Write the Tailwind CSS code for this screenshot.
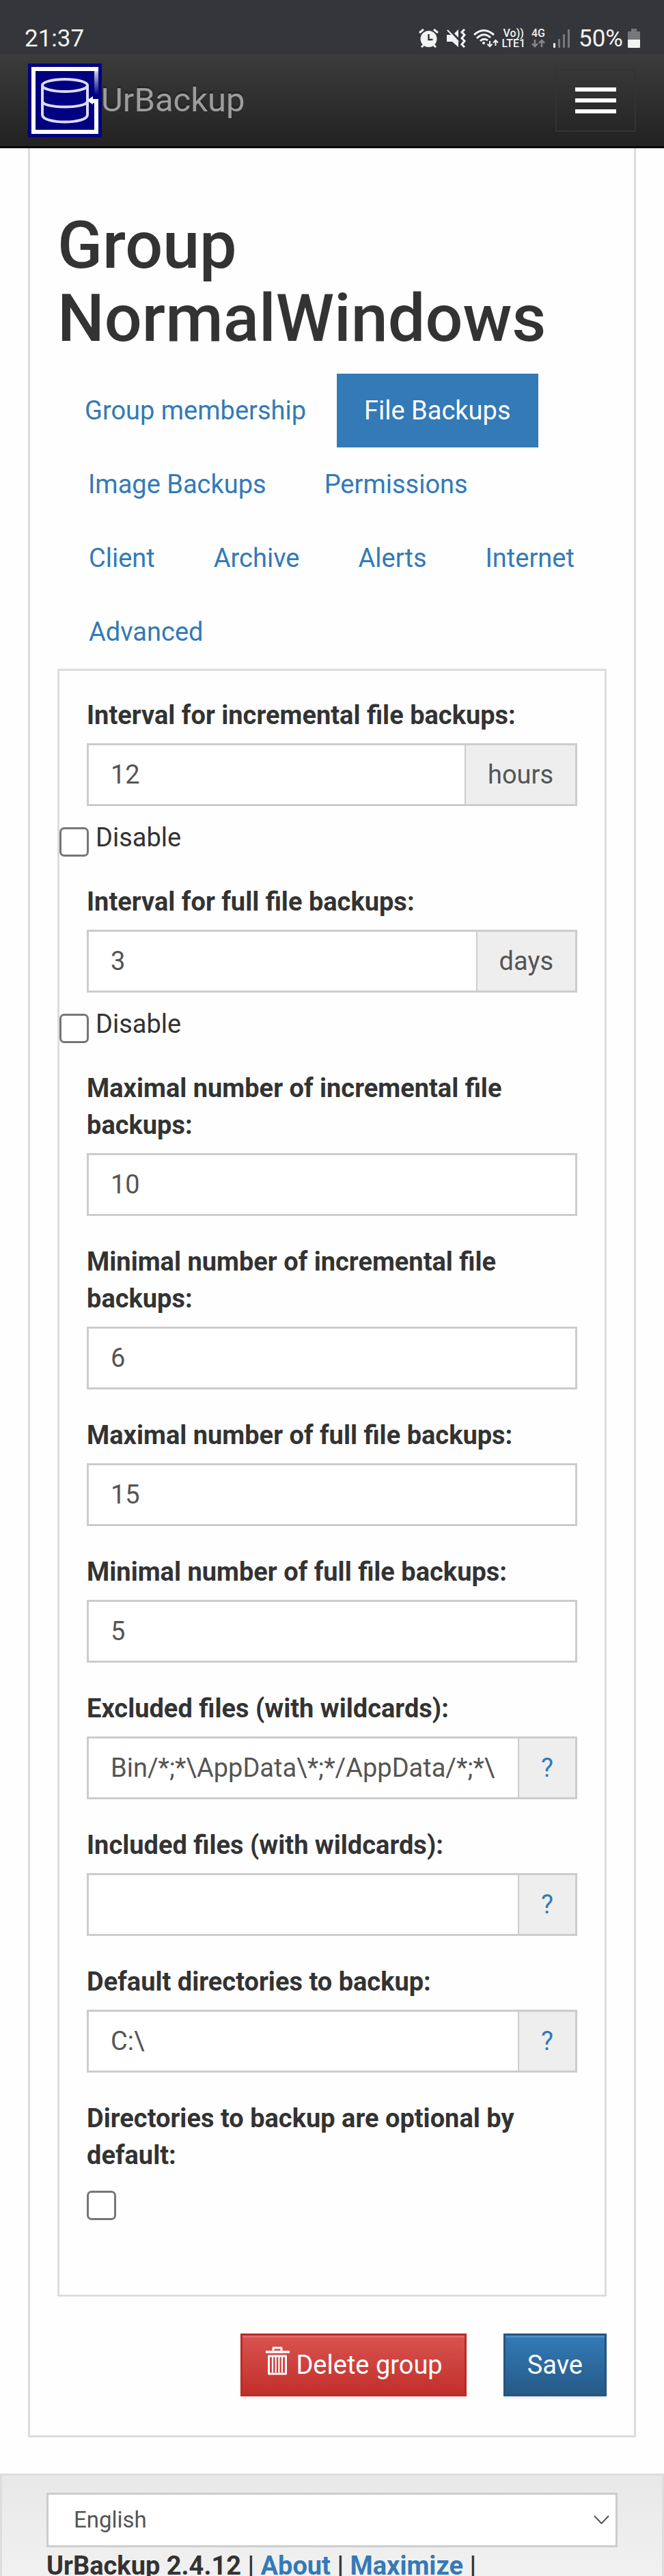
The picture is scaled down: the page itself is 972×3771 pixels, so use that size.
<!DOCTYPE html>
<html lang="en">
<head>
  <meta charset="UTF-8">
  <meta name="viewport" content="width=device-width, initial-scale=1">
  <title>UrBackup</title>
  <script src="https://cdn.jsdelivr.net/npm/@tailwindcss/browser@4"></script>
</head>
<body class="flex h-screen flex-col overflow-hidden bg-[#fefefe] font-[Roboto,'Liberation_Sans',sans-serif] text-[38px] leading-[54px] text-[#333]">

  <!-- Status bar -->
  <div class="flex h-[79px] shrink-0 items-end justify-between bg-[#35363b] pr-[35px] pb-2 pl-9 text-[#f2f2f2]">
    <span class="text-[35px] leading-[28px]">21:37</span>
    <div class="flex items-end">
      <svg class="mr-[10px] mb-[1px] h-[28px] w-[31px]" viewBox="0 0 31 28" fill="none" stroke="#f2f2f2" stroke-width="3">
        <circle cx="15.5" cy="15" r="12" fill="#f2f2f2" stroke="none"/>
        <path d="M2 6 8 1M29 6 23 1M5 27l4-4M26 27l-4-4"/>
        <path d="M15.5 8v8h6" stroke="#35363b" stroke-width="2.5"/>
      </svg>
      <svg class="mr-[11px] mb-[1px] h-[28px] w-[29px]" viewBox="0 0 29 28" fill="#f2f2f2">
        <path d="M1 9h7l10 11v7l-9-8H1zM12 7l6-6v12z"/>
        <path d="M2 2l16 17" stroke="#f2f2f2" stroke-width="2"/>
        <path d="M27 1l-4 4 4 4-4 5 4 4-4 5 4 4" fill="none" stroke="#f2f2f2" stroke-width="3"/>
      </svg>
      <svg class="mr-[4px] mb-[1px] h-[28px] w-[37px]" viewBox="0 0 37 28" fill="none" stroke="#f2f2f2" stroke-width="3">
        <path d="M1 9Q15-4 30 9M5 14Q15 4 25 13M10 18Q15 13 21 17"/>
        <circle cx="15" cy="21" r="2" fill="#f2f2f2" stroke="none"/>
        <path d="M24 18v8M20.500 22.500l3.500 3.500 3.500-3.500M32.500 25v-8M29 20.500l3.500-3.500 3.500 3.500" stroke-width="2"/>
      </svg>
      <div class="mr-[9px] text-center text-[16px] leading-[15px] font-medium">Vo))<br>LTE1</div>
      <div class="mr-[12px] flex flex-col items-center">
        <span class="text-[16px] leading-[15px] font-medium">4G</span>
        <svg class="mb-[1px] h-[14px] w-[20px]" viewBox="0 0 20 14" fill="none" stroke="#85868a" stroke-width="2.500">
          <path d="M5 2v10M1 8l4 4 4-4M15 13V3M11 7l4-4 4 4"/>
        </svg>
      </div>
      <svg class="mr-[13px] mb-[1px] h-[27px] w-[24px]" viewBox="0 0 24 27" fill="#77787b">
        <rect x="0" y="20" width="3" height="7" rx="1" fill="#f2f2f2"/>
        <rect x="7" y="14" width="3" height="13" rx="1"/>
        <rect x="14" y="7" width="3" height="20" rx="1"/>
        <rect x="21" y="0" width="3" height="27" rx="1"/>
      </svg>
      <span class="mr-[7px] text-[35px] leading-[28px]">50%</span>
      <svg class="mb-[1px] h-[28px] w-[18px]" viewBox="0 0 18 28">
        <path d="M0 16V5q0-1 1-1h4V0h8v4h4q1 0 1 1v11z" fill="#77787b"/>
        <path d="M0 16h18v11q0 1-1 1H1q-1 0-1-1z" fill="#f2f2f2"/>
      </svg>
    </div>
  </div>

  <!-- Navbar -->
  <nav class="flex h-[138px] shrink-0 items-center justify-between border-b-3 border-[#080808] bg-linear-to-b from-[#3c3c3c] to-[#222] px-[41px]">
    <a href="#" class="flex items-center text-[49px] text-[#9d9d9d] [text-shadow:0_-3px_0_rgba(0,0,0,0.25)]">
      <svg class="mr-[-1px] size-[108px]" viewBox="0 0 108 108" fill="none">
        <defs>
          <linearGradient id="fade" x1="0" y1="0" x2="0" y2="1">
            <stop offset="0" stop-color="#fff"/>
            <stop offset="1" stop-color="#fff" stop-opacity="0"/>
          </linearGradient>
        </defs>
        <rect width="108" height="108" fill="#000080"/>
        <path d="M103 8H8v92h92V55h-7" stroke="#fff" stroke-width="6"/>
        <rect x="97" y="11" width="6" height="35" fill="url(#fade)" opacity=".8"/>
        <path d="M86 54l9-6v12z" fill="#fff"/>
        <g stroke="#dcdcfa" stroke-width="4">
          <ellipse cx="54" cy="32" rx="33" ry="9"/>
          <path d="M21 32v43c0 14 66 14 66 0V32M21 56c4 10 62 10 66 0"/>
        </g>
      </svg>
      UrBackup
    </a>
    <button type="button" aria-label="Menu" class="flex h-[92px] w-[118px] flex-col items-center justify-center gap-[10px] border-2 border-[#333]">
      <span class="h-[6px] w-[60px] bg-white"></span>
      <span class="h-[6px] w-[60px] bg-white"></span>
      <span class="h-[6px] w-[60px] bg-white"></span>
    </button>
  </nav>

  <!-- Settings -->
  <main class="mx-[41px] shrink-0 border-3 border-t-0 border-[#ddd] px-10 pt-[89px] pb-[57px]">
    <h1 class="mb-[27px] text-[97px] leading-[107px] font-medium">Group NormalWindows</h1>

    <ul class="flex flex-wrap text-[#337ab7]">
      <li><a href="#" class="block px-10 py-[27px]">Group membership</a></li>
      <li class="ml-[5px]"><a href="#" class="block bg-[#337ab7] px-10 py-[27px] text-white">File Backups</a></li>
      <li class="ml-[5px]"><a href="#" class="block px-10 py-[27px]">Image Backups</a></li>
      <li class="ml-[5px]"><a href="#" class="block px-10 py-[27px]">Permissions</a></li>
      <li class="ml-[6px]"><a href="#" class="block px-10 py-[27px]">Client</a></li>
      <li class="ml-[6px]"><a href="#" class="block px-10 py-[27px]">Archive</a></li>
      <li class="ml-[6px]"><a href="#" class="block px-10 py-[27px]">Alerts</a></li>
      <li class="ml-[6px]"><a href="#" class="block px-10 py-[27px]">Internet</a></li>
      <li class="ml-[6px]"><a href="#" class="block px-10 py-[27px]">Advanced</a></li>
    </ul>

    <form>
      <div class="flex flex-col gap-10 border-3 border-[#ddd] px-10 pt-[38px] pb-[109px]">
        <div>
          <label for="update_freq_incr" class="mb-[14px] block font-bold">Interval for incremental file backups:</label>
          <div class="flex h-[92px] border-3 border-[#ccc] text-[#555]">
            <input id="update_freq_incr" type="text" value="12" class="min-w-0 flex-1 bg-white px-8">
            <span class="flex items-center border-l-2 border-[#ccc] bg-[#eee] px-8">hours</span>
          </div>
          <label class="mt-[19px] ml-[-40px] flex h-[54px] gap-[10px]">
            <input type="checkbox" class="mt-[12px] size-[43px] appearance-none rounded-[7px] border-3 border-[#767676] bg-white">
            Disable
          </label>
        </div>

        <div>
          <label for="update_freq_full" class="mb-[14px] block font-bold">Interval for full file backups:</label>
          <div class="flex h-[92px] border-3 border-[#ccc] text-[#555]">
            <input id="update_freq_full" type="text" value="3" class="min-w-0 flex-1 bg-white px-8">
            <span class="flex items-center border-l-2 border-[#ccc] bg-[#eee] px-8">days</span>
          </div>
          <label class="mt-[19px] ml-[-40px] flex h-[54px] gap-[10px]">
            <input type="checkbox" class="mt-[12px] size-[43px] appearance-none rounded-[7px] border-3 border-[#767676] bg-white">
            Disable
          </label>
        </div>

        <div>
          <label for="max_file_incr" class="mb-[14px] block font-bold">Maximal number of incremental file backups:</label>
          <input id="max_file_incr" type="text" value="10" class="block h-[92px] w-full border-3 border-[#ccc] bg-white px-8 text-[#555]">
        </div>

        <div>
          <label for="min_file_incr" class="mb-[14px] block font-bold">Minimal number of incremental file backups:</label>
          <input id="min_file_incr" type="text" value="6" class="block h-[92px] w-full border-3 border-[#ccc] bg-white px-8 text-[#555]">
        </div>

        <div>
          <label for="max_file_full" class="mb-[14px] block font-bold">Maximal number of full file backups:</label>
          <input id="max_file_full" type="text" value="15" class="block h-[92px] w-full border-3 border-[#ccc] bg-white px-8 text-[#555]">
        </div>

        <div>
          <label for="min_file_full" class="mb-[14px] block font-bold">Minimal number of full file backups:</label>
          <input id="min_file_full" type="text" value="5" class="block h-[92px] w-full border-3 border-[#ccc] bg-white px-8 text-[#555]">
        </div>

        <div>
          <label for="exclude_files" class="mb-[14px] block font-bold">Excluded files (with wildcards):</label>
          <div class="flex h-[92px] border-3 border-[#ccc] text-[#555]">
            <input id="exclude_files" type="text" value="Bin/*;*\AppData\*;*/AppData/*;*\" class="min-w-0 flex-1 bg-white px-8">
            <a href="#" class="flex items-center border-l-2 border-[#ccc] bg-[#eee] px-8 text-[#337ab7]">?</a>
          </div>
        </div>

        <div>
          <label for="include_files" class="mb-[14px] block font-bold">Included files (with wildcards):</label>
          <div class="flex h-[92px] border-3 border-[#ccc] text-[#555]">
            <input id="include_files" type="text" class="min-w-0 flex-1 bg-white px-8">
            <a href="#" class="flex items-center border-l-2 border-[#ccc] bg-[#eee] px-8 text-[#337ab7]">?</a>
          </div>
        </div>

        <div>
          <label for="default_dirs" class="mb-[14px] block font-bold">Default directories to backup:</label>
          <div class="flex h-[92px] border-3 border-[#ccc] text-[#555]">
            <input id="default_dirs" type="text" value="C:\" class="min-w-0 flex-1 bg-white px-8">
            <a href="#" class="flex items-center border-l-2 border-[#ccc] bg-[#eee] px-8 text-[#337ab7]">?</a>
          </div>
        </div>

        <div>
          <label for="backup_dirs_optional" class="mb-[25px] block font-bold">Directories to backup are optional by default:</label>
          <input id="backup_dirs_optional" type="checkbox" class="block size-[43px] appearance-none rounded-[7px] border-3 border-[#767676] bg-white">
        </div>
      </div>

      <div class="mt-[54px] flex justify-end gap-[54px] text-white [text-shadow:0_-3px_0_rgba(0,0,0,0.2)]">
        <button type="button" class="flex h-[92px] items-center gap-[8px] border-3 border-[#b92c28] bg-linear-to-b from-[#d9534f] to-[#c12e2a] px-8 shadow-[inset_0_3px_0_rgba(255,255,255,0.15),0_3px_3px_rgba(0,0,0,0.075)]">
          <svg class="mb-[12px] h-[42px] w-[38px]" viewBox="0 0 38 42" fill="none" stroke="#fff">
            <path d="M13 6V2h12v4" stroke-width="3" stroke-linejoin="round"/>
            <path d="M2 8h35" stroke-width="3.500"/>
            <path d="M6.500 14v26h25V14z" stroke-width="3" stroke-linejoin="round"/>
            <path d="M12 13v25M16.700 13v25M21.400 13v25M26 13v25" stroke-width="2.200"/>
          </svg>
          Delete group
        </button>
        <button type="submit" class="h-[92px] border-3 border-[#245580] bg-linear-to-b from-[#337ab7] to-[#265a88] px-8 shadow-[inset_0_3px_0_rgba(255,255,255,0.15),0_3px_3px_rgba(0,0,0,0.075)]">Save</button>
      </div>
    </form>
  </main>

  <!-- Footer -->
  <footer class="mt-[53px] shrink-0 border-3 border-[#ddd] bg-linear-to-b from-[#e8e8e8] to-[#f5f5f5] px-[65px] pt-[25px] pb-[51px]">
    <div class="relative">
      <select aria-label="Language" class="block h-[80px] w-full appearance-none border-3 border-[#ccc] bg-white px-[37px] text-[33px] text-[#555]">
        <option>English</option>
      </select>
      <svg class="pointer-events-none absolute top-[33px] right-[12px] h-[13px] w-[23px]" viewBox="0 0 23 13" fill="none" stroke="#555" stroke-width="2">
        <path d="M1 1l10.500 11L22 1"/>
      </svg>
    </div>
    <p class="font-bold">UrBackup 2.4.12 | <a href="#" class="text-[#337ab7]">About</a> | <a href="#" class="text-[#337ab7]">Maximize</a> |</p>
  </footer>

</body>
</html>
